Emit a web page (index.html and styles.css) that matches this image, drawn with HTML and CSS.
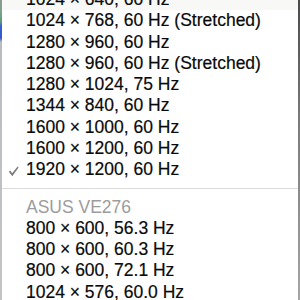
FILE: index.html
```html
<!DOCTYPE html>
<html>
<head>
<meta charset="utf-8">
<link rel="stylesheet" href="styles.css">
</head>
<body>
<div class="screen">
  <div class="edge-left"></div>
  <div class="menu">
    <ul class="items">
      <li class="item first">1024 × 640, 60 Hz</li>
      <li class="item">1024 × 768, 60 Hz (Stretched)</li>
      <li class="item">1280 × 960, 60 Hz</li>
      <li class="item">1280 × 960, 60 Hz (Stretched)</li>
      <li class="item">1280 × 1024, 75 Hz</li>
      <li class="item">1344 × 840, 60 Hz</li>
      <li class="item">1600 × 1000, 60 Hz</li>
      <li class="item">1600 × 1200, 60 Hz</li>
      <li class="item checked"><svg class="check" viewBox="0 0 11 11" width="11" height="11"><path d="M0.8 5.8 L2.2 4.6 L4.2 7.2 L9.6 0.6 L10.6 1.4 L4.3 10.2 Z" fill="#7a7a7a"/></svg>1920 × 1200, 60 Hz</li>
      <li class="sep"></li>
      <li class="item header">ASUS VE276</li>
      <li class="item">800 × 600, 56.3 Hz</li>
      <li class="item">800 × 600, 60.3 Hz</li>
      <li class="item">800 × 600, 72.1 Hz</li>
      <li class="item">1024 × 576, 60.0 Hz</li>
    </ul>
  </div>
  <div class="edge-right"></div>
</div>
</body>
</html>
```
FILE: styles.css
```css
html, body {
  margin: 0;
  padding: 0;
  width: 300px;
  height: 300px;
  overflow: hidden;
  background: #ffffff;
}
.screen {
  display: flex;
  width: 300px;
  height: 300px;
  overflow: hidden;
}
.edge-left {
  width: 2px;
  flex: none;
  background: linear-gradient(to bottom, #8c9a92 0px, #7aa48a 12px, #5b9a7c 22px, #3a5fd0 26px, #3457cc 38px, #b9bcbf 42px, #c4c4c4 300px);
}
.edge-right {
  width: 2px;
  flex: none;
  background: linear-gradient(to bottom, #4a4a4a 0px, #7a7a7a 120px, #a5a5a5 300px);
}
.menu {
  flex: 1;
  background: #ffffff;
  overflow: hidden;
}
.items {
  list-style: none;
  margin: -10.8px 0 0 0;
  padding: 0;
  font-family: "Liberation Sans", Arial, sans-serif;
  font-size: 17.5px;
  color: #0a0a0a;
  -webkit-text-stroke: 0.2px #0a0a0a;
}
.item {
  height: 21.25px;
  line-height: 21.25px;
  padding-left: 24px;
  white-space: nowrap;
  position: relative;
}
.item.first {
  background: linear-gradient(to bottom, #ffffff 0px, #ffffff 10.8px, #f8f8f6 10.9px, #f8f8f6 23px);
}
.item.header {
  color: #9c9c9c;
  -webkit-text-stroke: 0;
}
.check {
  position: absolute;
  left: 6px;
  top: 7px;
}
.sep {
  height: 16.25px;
  display: flex;
  align-items: flex-start;
}
.sep::before {
  content: "";
  display: block;
  width: 100%;
  height: 1px;
  margin-top: 8px;
  background: #dcdcdc;
}
```
